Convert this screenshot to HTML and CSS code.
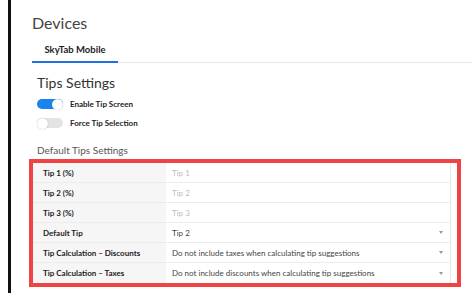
FILE: index.html
```html
<!DOCTYPE html>
<html lang="en">
<head>
  <meta charset="UTF-8" />
  <meta name="viewport" content="width=device-width, initial-scale=1" />
  <title>Devices</title>
  <link rel="stylesheet" href="styles.css">
</head>
<body>

  <div class="frame">
    <div class="main">
      <h1 class="page-title">Devices</h1>

      <!-- Вкладки устройств -->
      <div class="tabs">
        <div class="tab active">SkyTab Mobile</div>
      </div>

      <div class="section">
        <h2 class="section-title">Tips Settings</h2>

        <div class="toggle-row">
          <span class="toggle on"><span class="knob"></span></span>
          <span class="toggle-label">Enable Tip Screen</span>
        </div>
        <div class="toggle-row">
          <span class="toggle"><span class="knob"></span></span>
          <span class="toggle-label">Force Tip Selection</span>
        </div>

        <div class="sub-title">Default Tips Settings</div>

        <!-- Красная рамка вокруг таблицы -->
        <div class="highlight">
          <div class="settings-table">
            <div class="row">
              <div class="cell-label">Tip 1 (%)</div>
              <div class="cell-value placeholder">Tip 1</div>
            </div>
            <div class="row">
              <div class="cell-label">Tip 2 (%)</div>
              <div class="cell-value placeholder">Tip 2</div>
            </div>
            <div class="row">
              <div class="cell-label">Tip 3 (%)</div>
              <div class="cell-value placeholder">Tip 3</div>
            </div>
            <div class="row">
              <div class="cell-label">Default Tip</div>
              <div class="cell-value select">Tip 2<span class="caret"></span></div>
            </div>
            <div class="row">
              <div class="cell-label">Tip Calculation – Discounts</div>
              <div class="cell-value select">Do not include taxes when calculating tip suggestions<span class="caret"></span></div>
            </div>
            <div class="row">
              <div class="cell-label">Tip Calculation – Taxes</div>
              <div class="cell-value select">Do not include discounts when calculating tip suggestions<span class="caret"></span></div>
            </div>
          </div>
        </div>
      </div>
    </div>
  </div>

</body>
</html>
```

FILE: styles.css
```css
* {
  box-sizing: border-box;
}
html, body {
  margin: 0;
  height: 100%;
  background: #fff;
  font-family: Lato, "Noto Sans", sans-serif;
  color: #333;
}

/* Окно с чёрной левой границей */
.frame {
  height: 100%;
  margin-left: 8px;
  border-left: 3px solid #111;
  padding-left: 21px;
  overflow: hidden;
}

.main {
  padding-top: 13px;
}

.page-title {
  margin: 0;
  font-size: 16px;
  line-height: 20px;
  font-weight: 400;
  color: #444;
}

/* Вкладки */
.tabs {
  display: flex;
  border-bottom: 1px solid #e8e8e8;
}
.tab {
  width: 86px;
  text-align: center;
  font-size: 9.5px;
  font-weight: 700;
  line-height: 12px;
  padding: 11px 0 5px;
  color: #222;
  border-bottom: 2px solid transparent;
  margin-bottom: -1px;
}
.tab.active {
  border-bottom-color: #1f6fe0;
}

.section {
  padding-left: 5px;
}

.section-title {
  margin: 11px 0 3px;
  font-size: 14px;
  line-height: 18px;
  font-weight: 400;
  color: #333;
}

/* Переключатели */
.toggle-row {
  display: flex;
  align-items: center;
  gap: 7px;
  height: 18px;
  margin-bottom: 1px;
}
.toggle {
  position: relative;
  width: 26px;
  height: 10px;
  border-radius: 5px;
  background: #e3e3e3;
}
.toggle.on {
  background: #1a84ee;
}
.toggle .knob {
  position: absolute;
  top: -0.5px;
  left: 0;
  width: 11px;
  height: 11px;
  border-radius: 50%;
  background: #fff;
  box-shadow: 0 0 1px rgba(0,0,0,0.35);
}
.toggle.on .knob {
  left: 15px;
}
.toggle-label {
  font-size: 8px;
  font-weight: 700;
  color: #222;
}

.sub-title {
  margin-top: 11px;
  font-size: 10px;
  line-height: 14px;
  color: #555;
}

/* Рамка-выделение */
.highlight {
  margin: 2px 11px 0 -8px;
  border: 4px solid #f04444;
  padding-right: 6px;
}

.settings-table {
  border-right: 1px solid #eaeaea;
}
.row {
  display: flex;
  height: 20px;
  border-bottom: 1px solid #ececec;
  font-size: 8px;
}
.row:last-child {
  border-bottom: none;
}
.cell-label {
  width: 133px;
  flex: none;
  display: flex;
  align-items: center;
  padding-left: 10px;
  background: #f6f6f6;
  font-weight: 700;
  color: #222;
}
.cell-value {
  flex: 1;
  display: flex;
  align-items: center;
  padding: 0 7px 0 6px;
  color: #444;
}
.cell-value.placeholder {
  color: #bbb;
}
.cell-value.select {
  justify-content: space-between;
}
.caret {
  width: 0;
  height: 0;
  border-left: 2.5px solid transparent;
  border-right: 2.5px solid transparent;
  border-top: 3px solid #999;
}
```
